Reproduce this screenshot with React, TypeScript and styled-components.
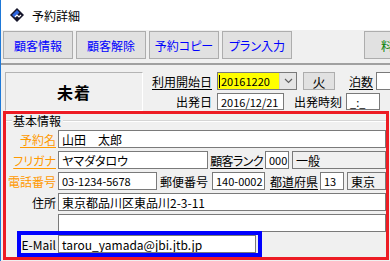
import styled, { createGlobalStyle } from "styled-components";

const GlobalStyle = createGlobalStyle`
  html, body {
    margin: 0;
    padding: 0;
    background: #f0f0f0;
  }
  body {
    font-family: "Noto Sans CJK JP", "Liberation Sans", sans-serif;
    font-size: 12px;
    color: #000;
    font-feature-settings: "palt";
  }
`;

const Window = styled.div`
  width: 390px;
  height: 261px;
  box-sizing: border-box;
  overflow: hidden;
  border-left: 1px solid #1e78d7;
  background: #f0f0f0;
`;

const TitleBar = styled.div`
  display: flex;
  align-items: center;
  gap: 8px;
  height: 30px;
  padding-left: 9px;
  background: #fff;
  font-size: 12px;
`;

const Toolbar = styled.div`
  display: flex;
  align-items: flex-start;
  gap: 3px;
  height: 32px;
  padding: 1px 0 0 2px;
  box-sizing: content-box;
  border-bottom: 2px solid #a0a0a0;
  white-space: nowrap;
`;

const ToolButton = styled.div<{ $green?: boolean; $ml?: number }>`
  flex: none;
  display: flex;
  align-items: center;
  justify-content: ${(p) => (p.$green ? "flex-start" : "center")};
  box-sizing: border-box;
  width: 70px;
  height: 28px;
  margin-left: ${(p) => p.$ml ?? 0}px;
  padding-left: ${(p) => (p.$green ? 16 : 0)}px;
  border: 1px solid #adadad;
  background: #e1e1e1;
  color: ${(p) => (p.$green ? "#008000" : "#0000ff")};
  font-size: 12px;
`;

const Header = styled.div`
  display: flex;
  height: 46px;
  box-sizing: border-box;
  padding: 7px 0 0 4px;
`;

const StatusBox = styled.div`
  flex: none;
  display: flex;
  align-items: center;
  justify-content: center;
  box-sizing: border-box;
  width: 138px;
  height: 39px;
  border: 1px solid;
  border-color: #b4b4b4 #fff #fff #b4b4b4;
  font-size: 16px;
  font-weight: bold;
  letter-spacing: 1px;
`;

const DateArea = styled.div`
  display: flex;
  flex-direction: column;
  gap: 3px;
  margin-left: 6px;
`;

const DateRow = styled.div<{ $h: number }>`
  display: flex;
  align-items: stretch;
  height: ${(p) => p.$h}px;
  white-space: nowrap;
`;

const Label = styled.div<{
  $w?: number;
  $ml?: number;
  $color?: string;
  $under?: boolean;
  $tight?: boolean;
}>`
  flex: none;
  width: ${(p) => (p.$w ? `${p.$w}px` : "auto")};
  margin-left: ${(p) => p.$ml ?? 0}px;
  display: flex;
  align-items: center;
  justify-content: flex-end;
  color: ${(p) => p.$color ?? "#000"};
  text-decoration: ${(p) => (p.$under ? "underline" : "none")};
  text-underline-offset: 2px;
  white-space: nowrap;
  font-size: 12px;
  letter-spacing: ${(p) => (p.$tight ? "-0.6px" : "0")};
`;

const Field = styled.div<{ $w?: number; $ml?: number; $fill?: string; $num?: boolean }>`
  ${(p) => (p.$w ? `flex: none; width: ${p.$w}px;` : "flex: 1;")}
  margin-left: ${(p) => p.$ml ?? 0}px;
  display: flex;
  align-items: center;
  box-sizing: border-box;
  padding-left: 3px;
  border: 1px solid #7a7a7a;
  background: ${(p) => p.$fill ?? "#fff"};
  font-size: ${(p) => (p.$num ? 11 : 12)}px;
  white-space: nowrap;
  overflow: hidden;
`;

const Combo = styled.div<{ $ml?: number }>`
  flex: none;
  display: flex;
  width: 80px;
  margin-left: ${(p) => p.$ml ?? 0}px;
  box-sizing: border-box;
  border: 1px solid #7a7a7a;
`;

const ComboText = styled.div`
  flex: 1;
  display: flex;
  align-items: center;
  padding-left: 1px;
  background: #ffff00;
  font-size: 11px;
`;

const Caret = styled.span`
  display: inline-block;
  width: 1px;
  height: 13px;
  margin-right: 1px;
  background: #000;
`;

const DropButton = styled.div`
  flex: none;
  display: flex;
  align-items: center;
  justify-content: center;
  width: 16px;
  background: #e5e5e5;
  border-left: 1px solid #cfcfcf;
`;

const DayButton = styled.div<{ $ml?: number }>`
  flex: none;
  display: flex;
  align-items: center;
  justify-content: center;
  width: 32px;
  margin-left: ${(p) => p.$ml ?? 0}px;
  box-sizing: border-box;
  border: 1px solid #adadad;
  background: #e1e1e1;
  font-size: 13px;
`;

const Section = styled.div`
  display: flex;
  flex-direction: column;
  width: 386px;
  height: 149px;
  margin-left: 2px;
  box-sizing: border-box;
  border: 3px solid #ed1c24;
`;

const LegendRow = styled.div`
  display: flex;
  align-items: center;
  height: 14px;
  margin-bottom: 2px;
`;

const GroupLine = styled.div<{ $w?: number }>`
  ${(p) => (p.$w ? `flex: none; width: ${p.$w}px;` : "flex: 1;")}
  height: 0;
  border-top: 1px solid #d5d5d5;
  border-bottom: 1px solid #fff;
`;

const LegendText = styled.span`
  padding: 0 2px 0 1px;
  font-size: 12px;
  line-height: 14px;
`;

const FormRows = styled.div`
  display: flex;
  flex-direction: column;
  gap: 3px;
`;

const FormRow = styled.div`
  display: flex;
  align-items: stretch;
  height: 18px;
`;

const MailRow = styled.div`
  display: flex;
  align-items: stretch;
  width: 237px;
  height: 18px;
  margin-left: 15px;
  padding-right: 2px;
  box-sizing: border-box;
  outline: 4px solid #0000ff;
`;

const AppIcon = () => (
  <svg width="14" height="14" viewBox="0 0 14 14">
    <polygon points="7,0 14,7 7,14 0,7" fill="#15152a" />
    <polygon points="7,2 9.5,4.5 4.5,9.5 2,7" fill="#2a64e0" />
    <polyline points="5,9 7,7 9,9 11,7" fill="none" stroke="#fff" strokeWidth="1.2" />
  </svg>
);

const Chevron = () => (
  <svg width="9" height="6" viewBox="0 0 9 6">
    <polyline points="1,1 4.5,4.5 8,1" fill="none" stroke="#606060" strokeWidth="1.2" />
  </svg>
);

const ORANGE = "#ff9900";

export default function App() {
  return (
    <>
      <GlobalStyle />
      <Window>
        <TitleBar>
          <AppIcon />
          <span>予約詳細</span>
        </TitleBar>

        <Toolbar>
          <ToolButton>顧客情報</ToolButton>
          <ToolButton>顧客解除</ToolButton>
          <ToolButton>予約コピー</ToolButton>
          <ToolButton>プラン入力</ToolButton>
          <ToolButton $green $ml={69}>
            料金照会
          </ToolButton>
        </Toolbar>

        <Header>
          <StatusBox>未着</StatusBox>
          <DateArea>
            <DateRow $h={18}>
              <Label $w={63} $under>
                利用開始日
              </Label>
              <Combo $ml={5}>
                <ComboText>
                  <Caret />
                  20161220
                </ComboText>
                <DropButton>
                  <Chevron />
                </DropButton>
              </Combo>
              <DayButton $ml={6}>火</DayButton>
              <Label $ml={14} $under>
                泊数
              </Label>
              <Field $w={30} $ml={3} />
            </DateRow>
            <DateRow $h={17}>
              <Label $w={63}>出発日</Label>
              <Field $w={67} $ml={5} $num>
                2016/12/21
              </Field>
              <Label $w={47} $ml={11}>
                出発時刻
              </Label>
              <Field $w={34} $ml={4} $num>
                _:_
              </Field>
            </DateRow>
          </DateArea>
        </Header>

        <Section>
          <LegendRow>
            <GroupLine $w={6} />
            <LegendText>基本情報</LegendText>
            <GroupLine />
          </LegendRow>
          <FormRows>
            <FormRow>
              <Label $w={50} $color={ORANGE} $under>
                予約名
              </Label>
              <Field $ml={2}>山田　太郎</Field>
            </FormRow>
            <FormRow>
              <Label $w={50} $color={ORANGE} $under>
                フリガナ
              </Label>
              <Field $w={150} $ml={2}>
                ヤマダタロウ
              </Field>
              <Label $w={49} $ml={6} $under $tight>
                顧客ランク
              </Label>
              <Field $w={24} $ml={2} $num>
                000
              </Field>
              <Field $ml={3} $fill="#f0f0f0">
                一般
              </Field>
            </FormRow>
            <FormRow>
              <Label $w={50} $color={ORANGE}>
                電話番号
              </Label>
              <Field $w={99} $ml={2} $num>
                03-1234-5678
              </Field>
              <Label $w={48} $ml={3}>
                郵便番号
              </Label>
              <Field $w={53} $ml={4} $num>
                140-0002
              </Field>
              <Label $w={48} $ml={5} $under>
                都道府県
              </Label>
              <Field $w={24} $ml={2} $num>
                13
              </Field>
              <Field $ml={3} $fill="#f0f0f0">
                東京
              </Field>
            </FormRow>
            <FormRow>
              <Label $w={50}>住所</Label>
              <Field $ml={2}>東京都品川区東品川2-3-11</Field>
            </FormRow>
            <FormRow>
              <Label $w={50} />
              <Field $ml={2} />
            </FormRow>
            <MailRow>
              <Label $w={35}>E-Mail</Label>
              <Field $ml={2}>tarou_yamada@jbi.jtb.jp</Field>
            </MailRow>
          </FormRows>
        </Section>
      </Window>
    </>
  );
}
